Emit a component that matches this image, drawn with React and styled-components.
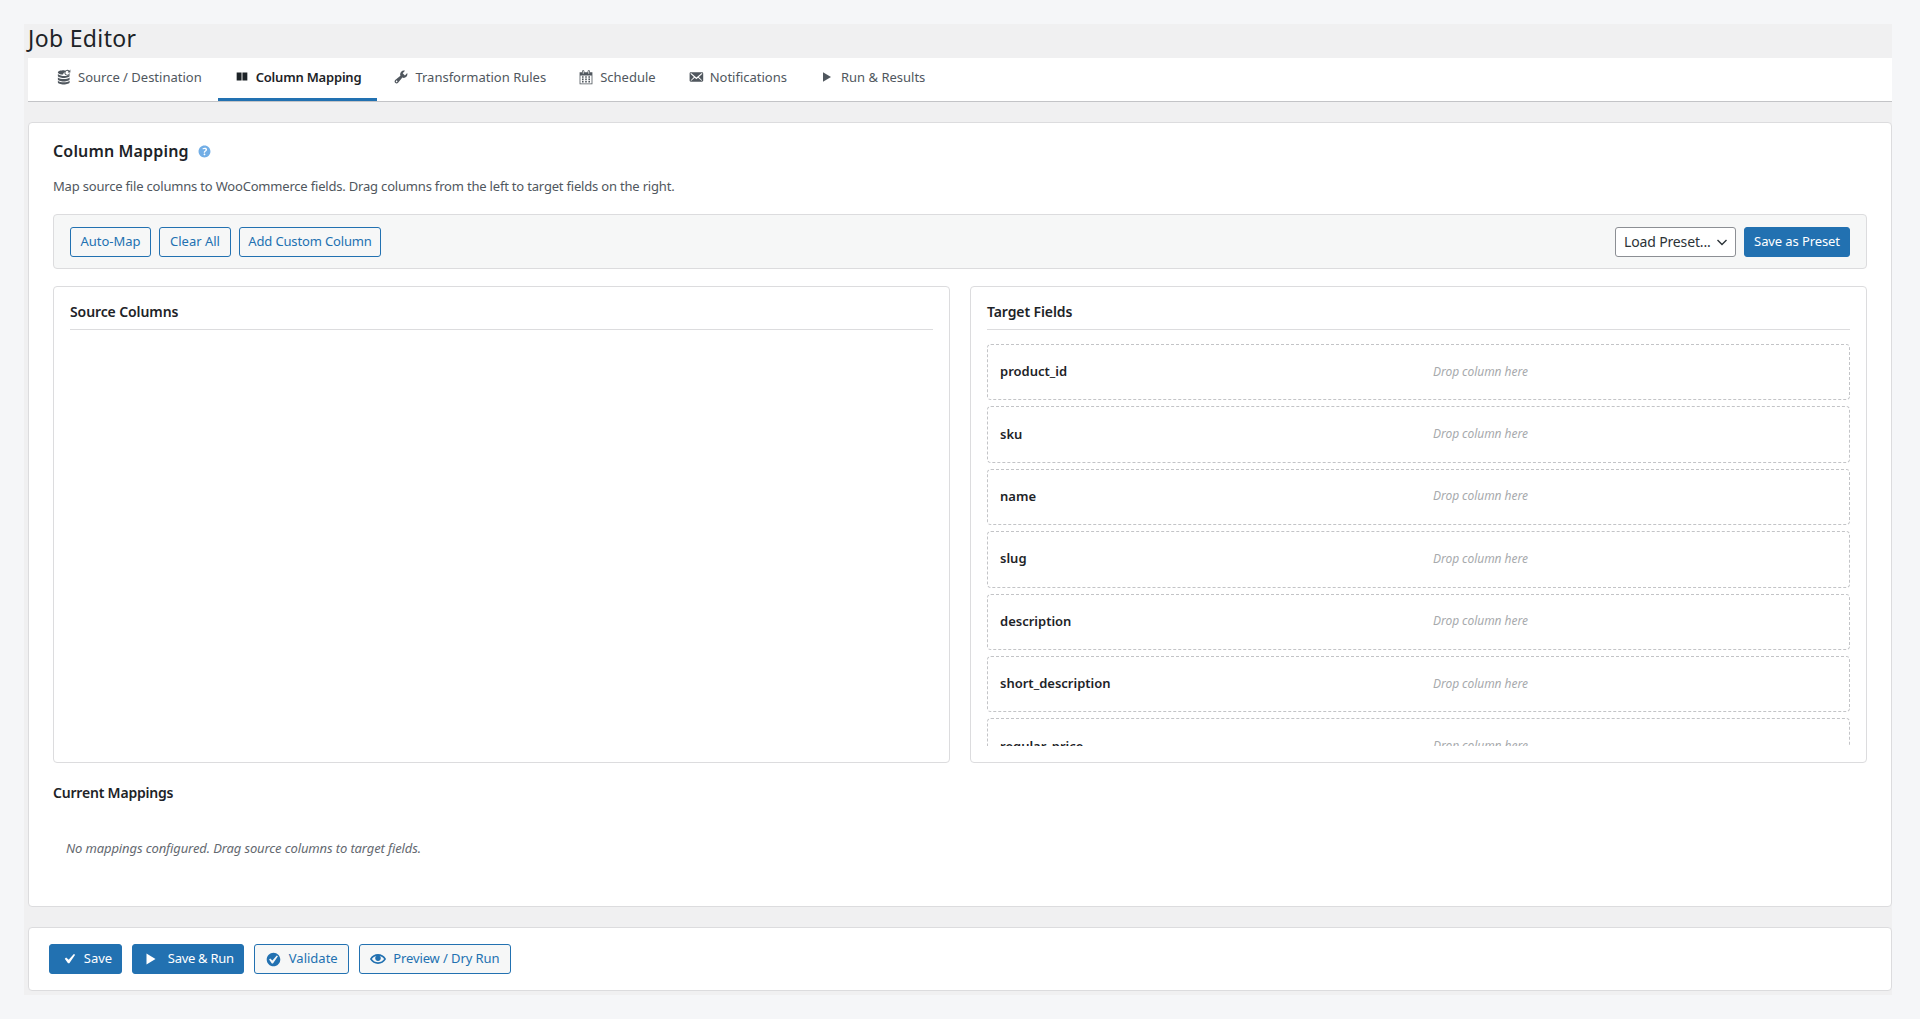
import React from 'react'
import styled, { createGlobalStyle } from 'styled-components'

const GlobalStyle = createGlobalStyle`
    * { box-sizing: border-box; }
    body {
        margin: 0;
        background: #f5f6f8;
        color: #1d2327;
        font-family: "Noto Sans", "Open Sans", sans-serif;
        font-size: 13px;
    }
`;

const Wrap = styled.div`
    margin: 24px 28px 24px 24px;
    padding: 0 0 4px 4px;
    background: #f0f0f1;
`;

const PageTitle = styled.h1`
    margin: 0;
    height: 34px;
    font-size: 23px;
    font-weight: 400;
    line-height: 29px;
    letter-spacing: 0.35px;
    color: #1d2327;
`;

const TabBar = styled.nav`
    display: flex;
    height: 44px;
    padding-left: 12px;
    background: #fff;
    border-bottom: 1px solid #c3c4c7;
`;

const Tab = styled.a`
    display: flex;
    align-items: center;
    gap: 6px;
    height: 43px;
    padding: 0 16px 2px;
    color: ${p => (p.$active ? '#1d2327' : '#50575e')};
    font-weight: ${p => (p.$active ? 600 : 400)};
    letter-spacing: ${p => (p.$active ? '-0.2px' : '0')};
    border-bottom: 3px solid ${p => (p.$active ? '#2271b1' : 'transparent')};
`;

const TabIcon = styled.svg`
    width: 16px;
    height: 16px;
    flex: none;
    fill: currentColor;
`;

const Card = styled.section`
    margin-top: 20px;
    height: 785px;
    padding: 0 24px;
    background: #fff;
    border: 1px solid #dcdcde;
    border-radius: 4px;
`;

const HeadingRow = styled.div`
    display: flex;
    align-items: center;
    gap: 7px;
    height: 22px;
    margin-top: 17px;
`;

const Heading = styled.h2`
    margin: 0;
    font-size: 16px;
    font-weight: 600;
    line-height: 22px;
    letter-spacing: 0.15px;
    color: #1d2327;
`;

const HelpIcon = styled.svg`
    width: 17px;
    height: 17px;
    fill: #72aee6;
`;

const Description = styled.p`
    margin: 15px 0 0;
    line-height: 18px;
    letter-spacing: -0.19px;
    color: #50575e;
`;

const Toolbar = styled.div`
    display: flex;
    justify-content: space-between;
    align-items: center;
    height: 55px;
    margin-top: 19px;
    padding: 0 16px;
    background: #f6f7f7;
    border: 1px solid #dcdcde;
    border-radius: 4px;
`;

const ButtonGroup = styled.div`
    display: flex;
    align-items: center;
    gap: 8px;
`;

const Button = styled.button`
    display: inline-flex;
    align-items: center;
    justify-content: center;
    gap: ${p => p.$gap || 0}px;
    width: ${p => p.$width}px;
    height: 30px;
    padding: 0 0 2px;
    font-family: inherit;
    font-size: 13px;
    letter-spacing: ${p => p.$spacing || 0}px;
    color: ${p => (p.$primary ? '#fff' : '#2271b1')};
    background: ${p => (p.$primary ? '#2271b1' : '#f6f7f7')};
    border: 1px solid #2271b1;
    border-radius: 3px;
`;

const ButtonIcon = styled.svg`
    width: ${p => p.$size || 16}px;
    height: ${p => p.$size || 16}px;
    margin-top: 2px;
    flex: none;
    fill: currentColor;
`;

const SelectBox = styled.div`
    display: flex;
    align-items: center;
    justify-content: space-between;
    width: 121px;
    height: 30px;
    padding: 0 7px 0 8px;
    font-size: 14px;
    letter-spacing: -0.15px;
    color: #2c3338;
    background: #fff;
    border: 1px solid #8c8f94;
    border-radius: 3px;
`;

const Chevron = styled.svg`
    width: 12px;
    height: 12px;
    fill: none;
    stroke: #2c3338;
    stroke-width: 1.4;
`;

const Panels = styled.div`
    display: grid;
    grid-template-columns: 1fr 1fr;
    gap: 20px;
    margin-top: 17px;
`;

const Panel = styled.div`
    height: 477px;
    padding: 16px;
    background: #fff;
    border: 1px solid #dcdcde;
    border-radius: 4px;
`;

const PanelTitle = styled.h3`
    margin: 0;
    height: 27px;
    font-size: 14px;
    font-weight: 600;
    line-height: 18px;
    letter-spacing: -0.1px;
    color: #1d2327;
    border-bottom: 1px solid #dcdcde;
`;

const FieldList = styled.div`
    height: 402px;
    margin-top: 14px;
    overflow: hidden;
`;

const FieldRow = styled.div`
    display: grid;
    grid-template-columns: 433px 1fr;
    align-items: center;
    height: 56.4px;
    margin-bottom: 6px;
    padding: 0 12px 2px;
    border: 1px dashed #c3c4c7;
    border-radius: 4px;
`;

const FieldName = styled.span`
    font-weight: 600;
    color: #1d2327;
`;

const DropHint = styled.span`
    font-size: 12px;
    font-style: italic;
    letter-spacing: -0.05px;
    color: #a7aaad;
`;

const SubHeading = styled.h3`
    margin: 20px 0 0;
    font-size: 14px;
    font-weight: 600;
    line-height: 20px;
    letter-spacing: -0.2px;
    color: #1d2327;
`;

const EmptyNote = styled.p`
    margin: 36px 0 0 13px;
    font-style: italic;
    line-height: 18px;
    letter-spacing: -0.12px;
    color: #646970;
`;

const Footer = styled.footer`
    display: flex;
    align-items: center;
    gap: 10px;
    height: 64px;
    margin-top: 20px;
    padding-left: 20px;
    background: #fff;
    border: 1px solid #dcdcde;
    border-radius: 4px;
`;

const tabs = [
    {
        label: 'Source / Destination',
        box: '1 1 15.5 15.5',
        path: 'M8.5 2.2c-3 0-5.7.8-5.7 2.1 0 1.2 2.3 2 5 2.1.2-.7.5-1.300 1-1.900.4-.5 1-.9 1.600-1.200-.6-.7-1.200-1.100-1.900-1.100zM2.800 5.900v1.700c0 1.300 2.700 2.100 5.700 2.100s5.700-.8 5.700-2.100V6.900c-1 .8-2.300 1.100-3.500.9-2.300.3-5.900-.1-7.900-1.900zM2.800 9.200v1.700c0 1.300 2.700 2.100 5.700 2.100s5.700-.8 5.700-2.100V9.200c-1.200 1-3.500 1.500-5.700 1.500s-4.500-.5-5.700-1.500zM2.800 12.400v1.500c0 1.300 2.700 2.100 5.700 2.100s5.700-.8 5.700-2.100v-1.500c-1.200 1-3.500 1.500-5.700 1.500s-4.500-.5-5.700-1.500zM12 1.800a2.800 2.800 0 1 0 2.600 3.800l-1-.3a1.800 1.800 0 1 1-.5-1.900l-.9.900h2.700V1.600l-1 1A2.800 2.800 0 0 0 12 1.800z',
    },
    { label: 'Column Mapping', path: 'M3 4h5.500v9H3zM9.500 4H15v9H9.500z', active: true },
    {
        label: 'Transformation Rules',
        box: '0 0 20 20',
        path: 'M16.68 9.77c-1.34 1.34-3.3 1.67-4.95.99l-5.41 6.52c-.99.99-2.59.99-3.58 0s-.99-2.59 0-3.57l6.52-5.42c-.68-1.65-.35-3.61.99-4.95 1.28-1.28 3.12-1.62 4.72-1.06l-2.89 2.89 2.82 2.82 2.86-2.87c.53 1.58.18 3.39-1.08 4.67zM3.81 16.21c.4.39 1.04.39 1.43 0 .4-.4.4-1.04 0-1.43-.39-.4-1.03-.4-1.43 0-.39.39-.39 1.03 0 1.43z',
    },
    {
        label: 'Schedule',
        box: '0 0 20 20',
        path: 'M15 4h3v15H2V4h3V3c0-.41.15-.76.44-1.06.29-.29.65-.44 1.06-.44s.77.15 1.06.44c.29.3.44.65.44 1.06v1h4V3c0-.41.15-.76.44-1.06.29-.29.65-.44 1.06-.44s.77.15 1.06.44c.29.3.44.65.44 1.06v1zM6 3v2.500c0 .14.05.26.15.36.09.09.21.14.35.14s.26-.05.35-.14c.1-.1.15-.22.15-.36V3c0-.14-.05-.26-.15-.35-.09-.1-.21-.15-.35-.15s-.26.05-.35.15c-.1.09-.15.21-.15.35zm7 0v2.500c0 .14.05.26.14.36.1.09.22.14.36.14s.26-.05.36-.14c.09-.1.14-.22.14-.36V3c0-.14-.05-.26-.14-.35-.1-.1-.22-.15-.36-.15s-.26.05-.36.15c-.09.09-.14.21-.14.35zm4 15V8H3v10h14zM7 9v2H5V9h2zm2 0h2v2H9V9zm4 2V9h2v2h-2zm-6 1v2H5v-2h2zm2 0h2v2H9v-2zm4 2v-2h2v2h-2zm-6 1v2H5v-2h2zm4 2H9v-2h2v2zm4 0h-2v-2h2v2z',
    },
    {
        label: 'Notifications',
        box: '0 0 20 20',
        path: 'M19 14.500v-9c0-.83-.67-1.500-1.500-1.500H3.490c-.83 0-1.500.67-1.500 1.500v9c0 .83.67 1.500 1.500 1.500H17.500c.83 0 1.500-.67 1.500-1.500zm-1.310-9.110c.33.33.15.67-.03.84L13.600 9.950l3.900 4.060c.12.14.2.36.06.51-.13.16-.43.15-.56.05l-4.370-3.730-2.140 1.950-2.130-1.950-4.370 3.730c-.13.1-.43.11-.56-.05-.14-.15-.06-.37.06-.51l3.900-4.060-4.060-3.720c-.18-.17-.36-.51-.03-.84s.67-.17.95.07l6.240 5.040 6.250-5.040c.28-.24.62-.4.95-.07z',
    },
    { label: 'Run & Results', box: '0 0 20 20', path: 'M5 4l10 6-10 6V4z' },
]

const fields = ['product_id', 'sku', 'name', 'slug', 'description', 'short_description', 'regular_price']

const YES = 'M14.830 4.890l1.340.94-5.810 8.380H9.020L5.780 9.670l1.340-1.250 2.570 2.400z'
const PLAY = 'M5 4l10 6-10 6V4z'
const YES_ALT = 'M10 2c-4.420 0-8 3.580-8 8s3.580 8 8 8 8-3.580 8-8-3.580-8-8-8zm-.615 12.660h-1.340l-3.240-4.540 1.340-1.250 2.570 2.400 5.140-5.930 1.340.94-5.810 8.380z'
const EYE = 'M19.700 9.400C17.700 6 14 3.900 10 3.900S2.300 6 .3 9.400L0 10l.3.6c2 3.400 5.700 5.500 9.700 5.500s7.700-2.100 9.700-5.500l.3-.6-.3-.6zM10 14.100c-3.100 0-6-1.600-7.700-4.100C3.600 8 5.700 6.600 8 6.100c-.9.6-1.500 1.700-1.500 2.900 0 1.900 1.600 3.500 3.500 3.500s3.500-1.600 3.500-3.500c0-1.200-.6-2.300-1.500-2.900 2.300.5 4.400 1.900 5.700 3.900-1.700 2.500-4.600 4.100-7.700 4.100z'
const HELP = 'M17 10c0-3.870-3.140-7-7-7-3.870 0-7 3.130-7 7 0 3.860 3.130 7 7 7 3.860 0 7-3.140 7-7zm-6.300 1.480H9.140v-.43c0-.38.08-.7.24-.98s.46-.57.88-.89c.41-.29.68-.53.81-.71.14-.18.2-.39.2-.62 0-.25-.09-.44-.28-.58-.19-.13-.45-.19-.79-.19-.58 0-1.250.19-2 .57l-.64-1.280c.87-.49 1.800-.74 2.770-.74.81 0 1.450.2 1.920.58.48.39.71.91.71 1.550 0 .43-.09.8-.29 1.110-.19.32-.57.67-1.110 1.060-.38.28-.61.49-.71.63-.1.15-.15.34-.15.57v.35zm-1.470 2.740c-.18-.17-.27-.42-.27-.73 0-.33.08-.58.26-.75s.43-.25.77-.25c.32 0 .57.09.75.26s.27.42.27.74c0 .3-.09.55-.27.72-.18.18-.43.27-.75.27-.33 0-.58-.09-.76-.26z'

function Icon({ path, size }) {
    return (
        <ButtonIcon viewBox="0 0 20 20" $size={size}>
            <path d={path} />
        </ButtonIcon>
    )
}

function App() {
    return (
        <>
            <GlobalStyle />
            <Wrap>
                <PageTitle>Job Editor</PageTitle>
                <TabBar>
                    {tabs.map(tab => (
                        <Tab key={tab.label} $active={tab.active}>
                            <TabIcon viewBox={tab.box || '0 0 18 18'}>
                                <path d={tab.path} />
                            </TabIcon>
                            {tab.label}
                        </Tab>
                    ))}
                </TabBar>

                <Card>
                    <HeadingRow>
                        <Heading>Column Mapping</Heading>
                        <HelpIcon viewBox="0 0 20 20"><path d={HELP} /></HelpIcon>
                    </HeadingRow>
                    <Description>
                        Map source file columns to WooCommerce fields. Drag columns from the left to target fields on the right.
                    </Description>

                    <Toolbar>
                        <ButtonGroup>
                            <Button $width={81}>Auto-Map</Button>
                            <Button $width={72}>Clear All</Button>
                            <Button $width={142} $spacing={-0.15}>Add Custom Column</Button>
                        </ButtonGroup>
                        <ButtonGroup>
                            <SelectBox>
                                Load Preset...
                                <Chevron viewBox="0 0 12 12"><path d="M1.500 4l4.500 4.500L10.500 4" /></Chevron>
                            </SelectBox>
                            <Button $primary $width={106} $spacing={-0.1}>Save as Preset</Button>
                        </ButtonGroup>
                    </Toolbar>

                    <Panels>
                        <Panel>
                            <PanelTitle>Source Columns</PanelTitle>
                        </Panel>
                        <Panel>
                            <PanelTitle>Target Fields</PanelTitle>
                            <FieldList>
                                {fields.map(name => (
                                    <FieldRow key={name}>
                                        <FieldName>{name}</FieldName>
                                        <DropHint>Drop column here</DropHint>
                                    </FieldRow>
                                ))}
                            </FieldList>
                        </Panel>
                    </Panels>

                    <SubHeading>Current Mappings</SubHeading>
                    <EmptyNote>No mappings configured. Drag source columns to target fields.</EmptyNote>
                </Card>

                <Footer>
                    <Button $primary $width={73} $gap={5}><Icon path={YES} size={20} />Save</Button>
                    <Button $primary $width={111.5} $gap={8} $spacing={-0.3}><Icon path={PLAY} size={18} />Save &amp; Run</Button>
                    <Button $width={95.5} $gap={7}><Icon path={YES_ALT} size={17} />Validate</Button>
                    <Button $width={151.5} $gap={7} $spacing={-0.1}><Icon path={EYE} size={16} />Preview / Dry Run</Button>
                </Footer>
            </Wrap>
        </>
    )
}

export default App
